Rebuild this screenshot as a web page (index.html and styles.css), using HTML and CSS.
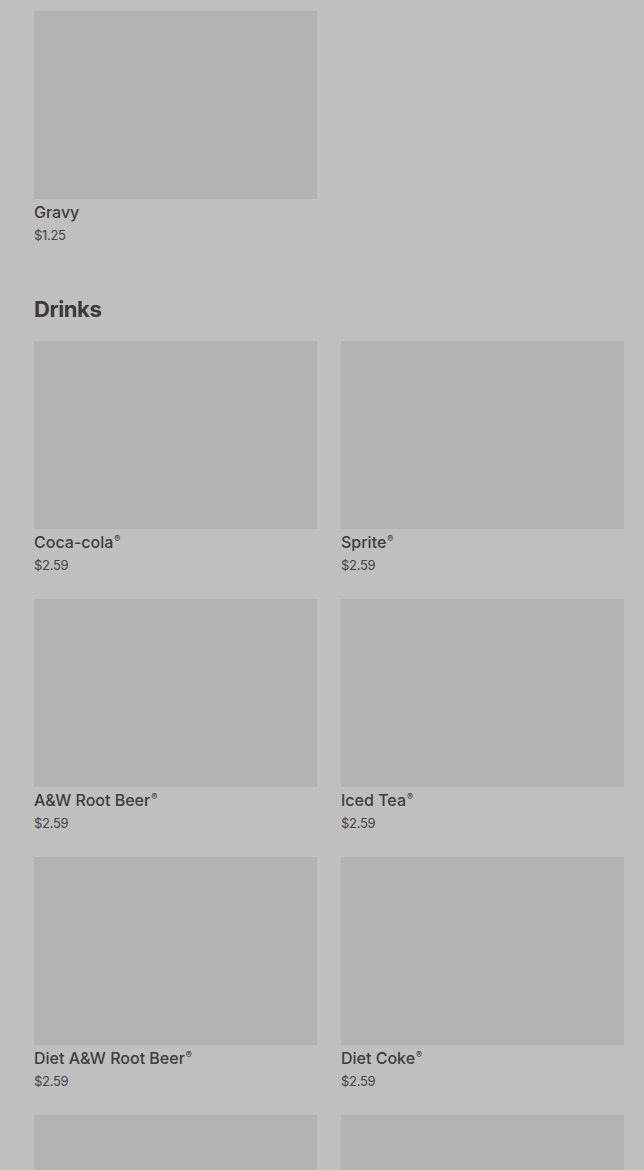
FILE: index.html
```html
<!DOCTYPE html>
<html lang="en">
<head>
    <meta charset="UTF-8">
    <meta name="viewport" content="width=device-width, initial-scale=1.0">
    <title>Menu</title>
    <link rel="stylesheet" href="styles.css">
</head>
<body>
    <div class="menu">
        <section class="category">
            <div class="items">
                <div class="item">
                    <div class="photo"></div>
                    <div class="name">Gravy</div>
                    <div class="price">$1.25</div>
                </div>
            </div>
        </section>

        <section class="category">
            <h2>Drinks</h2>
            <div class="items">
                <div class="item">
                    <div class="photo"></div>
                    <div class="name">Coca-cola<sup>®</sup></div>
                    <div class="price">$2.59</div>
                </div>
                <div class="item">
                    <div class="photo"></div>
                    <div class="name">Sprite<sup>®</sup></div>
                    <div class="price">$2.59</div>
                </div>
                <div class="item">
                    <div class="photo"></div>
                    <div class="name">A&amp;W Root Beer<sup>®</sup></div>
                    <div class="price">$2.59</div>
                </div>
                <div class="item">
                    <div class="photo"></div>
                    <div class="name">Iced Tea<sup>®</sup></div>
                    <div class="price">$2.59</div>
                </div>
                <div class="item">
                    <div class="photo"></div>
                    <div class="name">Diet A&amp;W Root Beer<sup>®</sup></div>
                    <div class="price">$2.59</div>
                </div>
                <div class="item">
                    <div class="photo"></div>
                    <div class="name">Diet Coke<sup>®</sup></div>
                    <div class="price">$2.59</div>
                </div>
                <div class="item">
                    <div class="photo"></div>
                </div>
                <div class="item">
                    <div class="photo"></div>
                </div>
            </div>
        </section>
    </div>
</body>
</html>
```

FILE: styles.css
```css
html, body {
    margin: 0;
    background-color: #bfbfbf;
}

body {
    font-family: Inter, "Liberation Sans", sans-serif;
    color: #3b3b3b;
}

.menu {
    padding: 11px 20px 0 34px;
}

.category {
    margin-bottom: 49px;
}

.category h2 {
    margin: 0 0 17px;
    font-size: 22px;
    line-height: 30px;
    font-weight: 700;
    letter-spacing: -0.4px;
    color: #3a3a3a;
}

.items {
    display: grid;
    grid-template-columns: 283px 283px;
    column-gap: 24px;
    row-gap: 24px;
}

.photo {
    height: 188px;
    background-color: #b3b3b3;
}

.name {
    margin-top: 2px;
    font-size: 16px;
    line-height: 22px;
    font-weight: 500;
    color: #3d3d3d;
}

.name sup {
    font-size: 9px;
    vertical-align: 6px;
    line-height: 0;
    margin-left: 1px;
}

.price {
    margin-top: 2px;
    font-size: 13px;
    line-height: 20px;
    letter-spacing: -0.3px;
    color: #444;
}
```
